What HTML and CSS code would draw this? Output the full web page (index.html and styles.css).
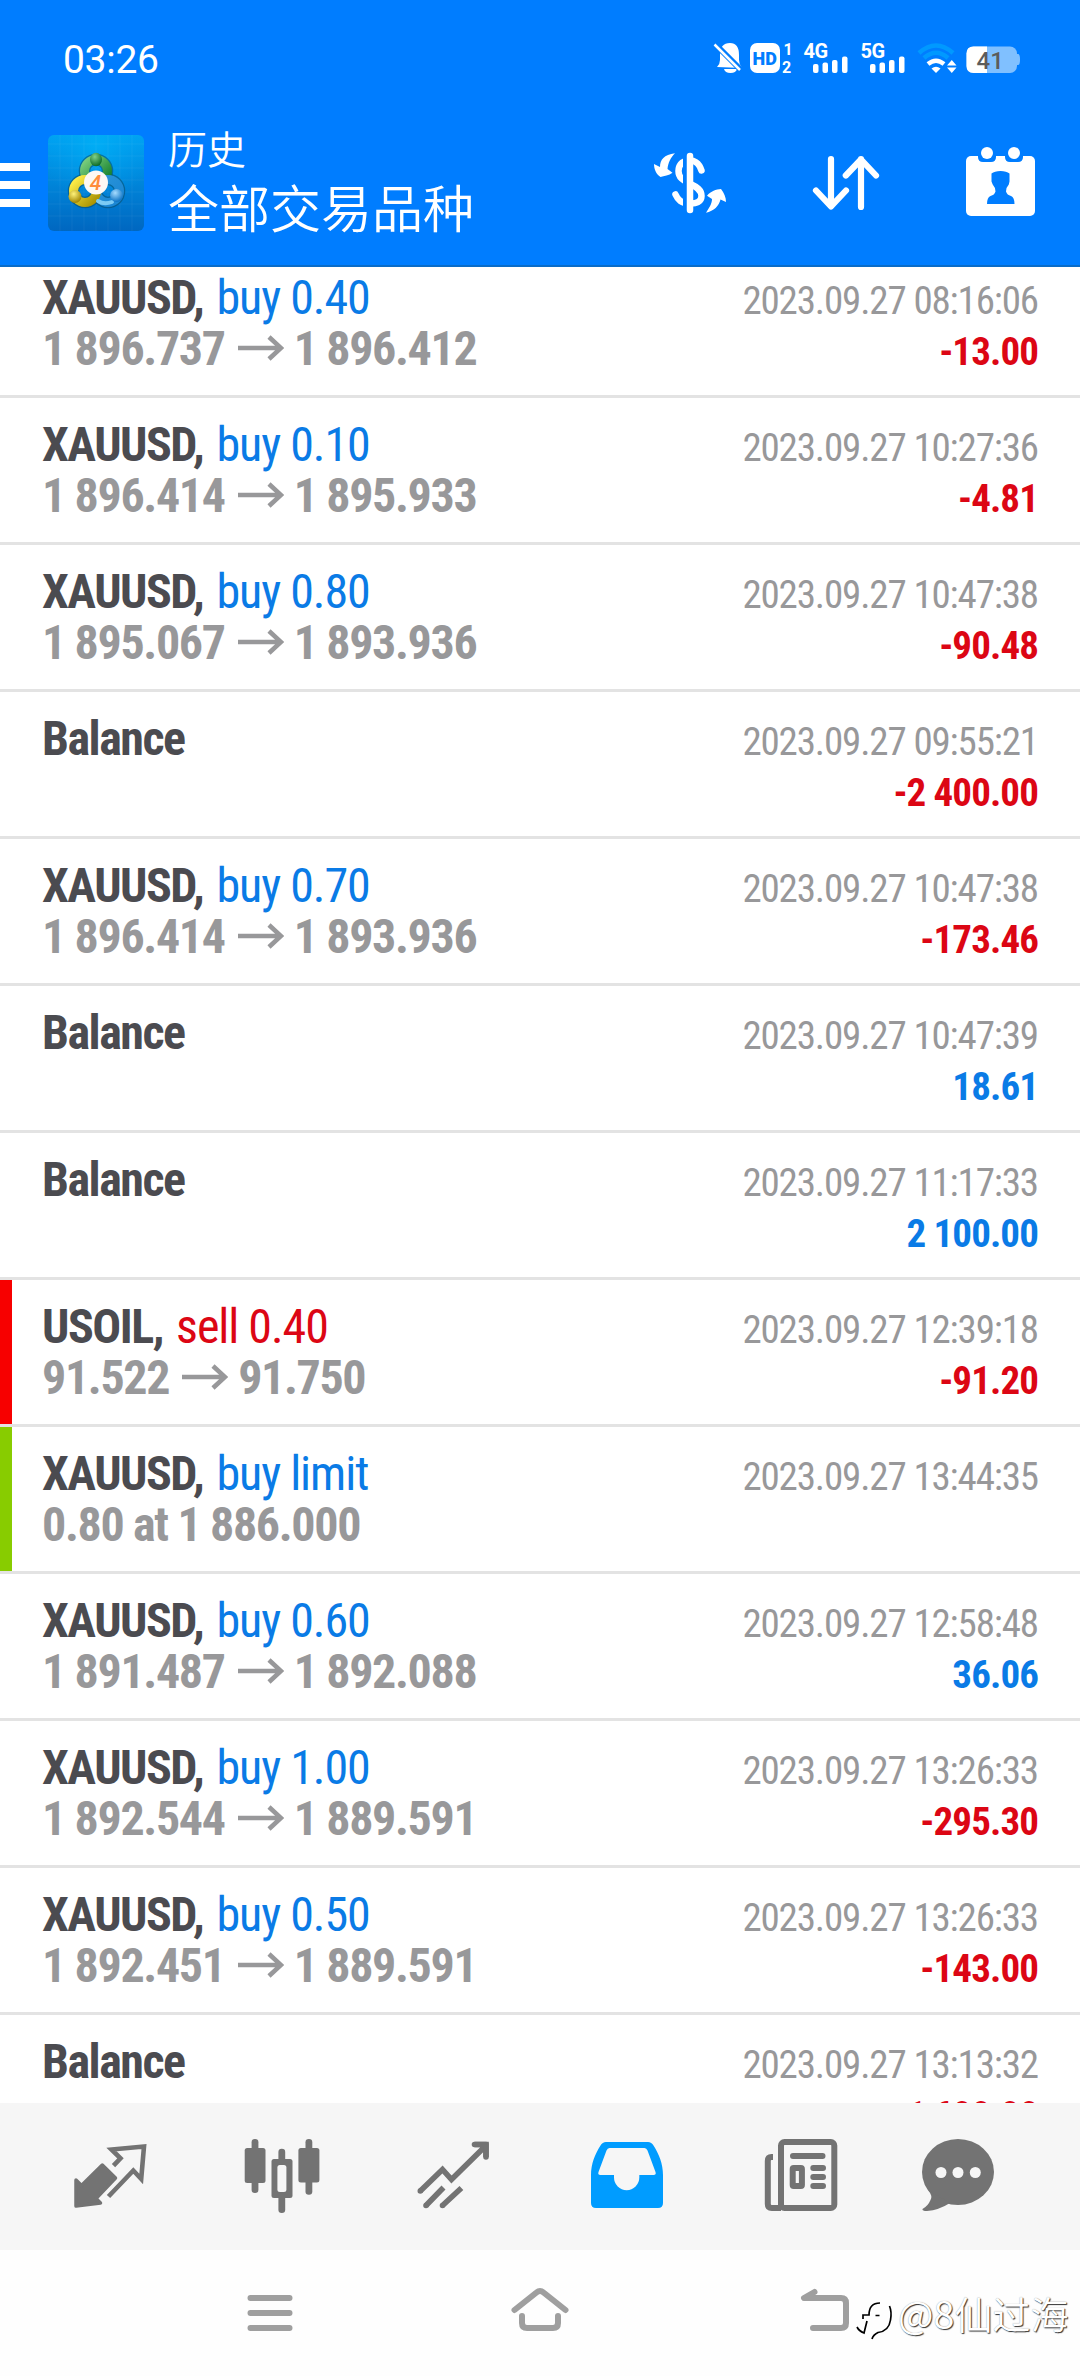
FILE: index.html
```
<!DOCTYPE html>
<html lang="zh-CN">
<head>
<meta charset="utf-8">
<title>历史</title>
<link rel="stylesheet" href="styles.css">
</head>
<body>
<svg class="defs" width="0" height="0" aria-hidden="true">
  <symbol id="arrow" viewBox="0 0 46 26"><path d="M0 13H43M31 2L43 13L31 24" fill="none" stroke="currentColor" stroke-width="4.6"/></symbol>
</svg>
<div class="screen">
  <header class="header">
    <div class="status">
      <span class="time">03:26</span>
      <svg class="status-icons" width="330" height="48" viewBox="700 34 330 48">
        <g fill="#fff">
          <path d="M717 67q3-3 3-7v-5q0-12 10-12 9 0 9 12v5q0 4 3 8zM724 69h13q-1 4-6.500 4T724 69z"/>
          <path d="M713 42L742 71" stroke="#007dff" stroke-width="6"/>
          <path d="M714.500 44.500L740 70" stroke="#fff" stroke-width="2.500"/>
          <rect x="750" y="43" width="30" height="30" rx="7"/>
          <rect x="813" y="64" width="5.500" height="9" rx="2"/><rect x="822.500" y="62.500" width="5.500" height="10.500" rx="2"/><rect x="832" y="60" width="5.500" height="13" rx="2"/><rect x="842" y="56.500" width="5.500" height="16.500" rx="2"/>
          <rect x="870" y="64" width="5.500" height="9" rx="2"/><rect x="879.500" y="62.500" width="5.500" height="10.500" rx="2"/><rect x="889" y="60" width="5.500" height="13" rx="2"/><rect x="899" y="56.500" width="5.500" height="16.500" rx="2"/>
          <path d="M931.500 68.500Q936 65 940.500 68.500L936 73z"/>
          <path d="M947 65.500L951.800 60L956.500 65.500zM947 67.500L951.800 73L956.500 67.500z"/>
          <text x="783.500" y="54.500" class="t-num">1</text><text x="782" y="73" class="t-num">2</text>
          <text x="803.500" y="57.500" class="t-net">4G</text><text x="860.500" y="57.500" class="t-net">5G</text>
        </g>
        <text x="752.500" y="65" class="t-hd">HD</text>
        <path d="M928 64Q936 57.500 944 64" fill="none" stroke="#fff" stroke-width="4.500"/>
        <path d="M919 53Q936 38 953 53M924 58Q936 47.500 948 58" fill="none" stroke="#0099ff" stroke-width="4.500"/>
        <path d="M1016 54h2q2 0 2 5.500t-2 5.500h-2z" fill="#80c0ff"/>
        <rect x="966.500" y="46.500" width="50.500" height="26.500" rx="7" fill="#80c0ff"/>
        <path d="M987 46.500V73H973.500q-7 0-7-7V53.500q0-7 7-7z" fill="#fff"/>
        <text x="976.500" y="68.500" class="t-bat">41</text>
      </svg>
    </div>
    <div class="toolbar">
      <div class="menu"><i></i><i></i><i></i></div>
      <svg class="logo" width="96" height="96" viewBox="0 0 96 96">
        <defs>
          <linearGradient id="bg" x1="0" y1="0" x2="0" y2="1"><stop offset="0" stop-color="#00a3f2"/><stop offset=".45" stop-color="#0088dc"/><stop offset="1" stop-color="#0067c0"/></linearGradient>
          <radialGradient id="glow" cx=".5" cy=".1" r=".6"><stop offset="0" stop-color="#00b4f8" stop-opacity=".7"/><stop offset="1" stop-color="#00a0f0" stop-opacity="0"/></radialGradient>
          <linearGradient id="gr" x1="0" y1="0" x2="1" y2="1"><stop offset="0" stop-color="#7ccf80"/><stop offset="1" stop-color="#0e7a26"/></linearGradient>
          <linearGradient id="ye" x1="0" y1="0" x2="1" y2="1"><stop offset="0" stop-color="#fff04a"/><stop offset="1" stop-color="#a89000"/></linearGradient>
          <linearGradient id="bl" x1="0" y1="0" x2="1" y2="1"><stop offset="0" stop-color="#2a94d8"/><stop offset="1" stop-color="#1a86d4"/></linearGradient>
          <radialGradient id="gb" cx=".4" cy=".3" r=".7"><stop offset="0" stop-color="#7fd08a"/><stop offset="1" stop-color="#0c6a26"/></radialGradient>
          <radialGradient id="yb" cx=".4" cy=".3" r=".7"><stop offset="0" stop-color="#fff27a"/><stop offset="1" stop-color="#a08400"/></radialGradient>
          <radialGradient id="bb" cx=".4" cy=".3" r=".7"><stop offset="0" stop-color="#a5dcff"/><stop offset="1" stop-color="#0b72c4"/></radialGradient>
        </defs>
        <rect width="96" height="96" rx="6" fill="url(#bg)"/><rect width="96" height="96" rx="6" fill="url(#glow)"/>
        <path d="M12 0V96M24 0V96M36 0V96M48 0V96M60 0V96M72 0V96M84 0V96M0 9H96M0 21H96M0 33H96M0 45H96M0 57H96M0 69H96M0 81H96" stroke="#fff" stroke-opacity=".05"/>
        <g fill="none" stroke-linecap="round">
          <g stroke="#0a4a66" stroke-opacity=".55" stroke-width="11.500"><circle cx="48" cy="36" r="11.500"/><circle cx="37" cy="56" r="11.500"/><circle cx="60" cy="56" r="11.500"/></g>
          <circle cx="48" cy="36" r="11.500" stroke="url(#gr)" stroke-width="9"/>
          <circle cx="60" cy="56" r="11.500" stroke="url(#bl)" stroke-width="9"/>
          <circle cx="37" cy="56" r="11.500" stroke="url(#ye)" stroke-width="9"/>
          <path d="M50 66Q56 70 64 67" stroke="#7ccbf5" stroke-width="4"/>
        </g>
        <ellipse cx="48" cy="24.500" rx="6" ry="6.800" fill="url(#gb)"/>
        <circle cx="27" cy="61.500" r="6.500" fill="url(#yb)"/><circle cx="68.500" cy="60.500" r="6.500" fill="url(#bb)"/>
        <circle cx="48" cy="47.500" r="12" fill="#fdf8f4"/>
        <text x="47.500" y="55" class="t-four">4</text>
      </svg>
      <div class="titles"><span class="t1">历史</span><span class="t2">全部交易品种</span></div>
      <svg class="act a1" width="80" height="66" viewBox="0 0 80 66">
        <path d="M51.500 20.500C49 12 43 10 39 10.500C31 11 28.500 16 28.500 21C28.500 29 35 31 40.500 34C47 37 51.500 40 51.500 46C51.500 52 46 54 39 53.500C31 53 28 50 25.500 44.500" fill="none" stroke="#fff" stroke-width="6.500" stroke-linecap="round"/>
        <path d="M35 2V64" stroke="#007dff" stroke-width="4"/>
        <path d="M40 6V60" stroke="#fff" stroke-width="6.500" stroke-linecap="round"/>
        <path d="M25 3.300C14 4.500 10 10 10 17L4 14C4 19 6 24 10.500 27C14 26 19 25.500 22.500 22.700L17.500 19C18 13 21 7 25 3.300ZM56 62.700C59 58 62 54 62 49L57 45.700C61 41 66 39.500 71 39C74 43 76 47 76 52L70.500 49.500C69 56 64 61 56 62.700Z" fill="#fff"/>
      </svg>
      <svg class="act a2" width="72" height="66" viewBox="0 0 72 66"><path d="M21 9V56M6 40.500L21 56.500L36 40.500M51 57V9M35.800 25.500L51 9.500L66 25.500" fill="none" stroke="#fff" stroke-width="6.200" stroke-linecap="round" stroke-linejoin="round"/></svg>
      <svg class="act a3" width="70" height="72" viewBox="0 0 70 72">
        <rect y="10" width="69" height="60" rx="5" fill="#fff"/>
        <path d="M12 6h18v5q0 5-5 5h-8q-5 0-5-5zM39 6h18v5q0 5-5 5h-8q-5 0-5-5z" fill="#007dff"/>
        <circle cx="21" cy="7" r="6" fill="#fff"/><circle cx="48" cy="7" r="6" fill="#fff"/>
        <path d="M34.500 25q6 0 9 2.500v8l-.700 3q-2.800 3-2.800 7 1 3.500 5 4.500 3.500 1.500 3.500 8H21q0-6.500 3.500-8 4-1 5-4.500 0-4-2.800-7l-1.200-3v-8q3-2.500 9-2.500z" fill="#007dff"/>
      </svg>
    </div>
  </header>

  <main class="list">
    <div class="row first"><div class="line"><span><b>XAUUSD,</b> <span class="buy">buy 0.40</span></span><time>2023.09.27 08:16:06</time></div><div class="line"><span class="price">1 896.737<svg class="ar"><use href="#arrow"/></svg>1 896.412</span><span class="sum neg">-13.00</span></div></div>
    <div class="row"><div class="line"><span><b>XAUUSD,</b> <span class="buy">buy 0.10</span></span><time>2023.09.27 10:27:36</time></div><div class="line"><span class="price">1 896.414<svg class="ar"><use href="#arrow"/></svg>1 895.933</span><span class="sum neg">-4.81</span></div></div>
    <div class="row"><div class="line"><span><b>XAUUSD,</b> <span class="buy">buy 0.80</span></span><time>2023.09.27 10:47:38</time></div><div class="line"><span class="price">1 895.067<svg class="ar"><use href="#arrow"/></svg>1 893.936</span><span class="sum neg">-90.48</span></div></div>
    <div class="row"><div class="line"><b>Balance</b><time>2023.09.27 09:55:21</time></div><div class="line end"><span class="sum neg">-2 400.00</span></div></div>
    <div class="row"><div class="line"><span><b>XAUUSD,</b> <span class="buy">buy 0.70</span></span><time>2023.09.27 10:47:38</time></div><div class="line"><span class="price">1 896.414<svg class="ar"><use href="#arrow"/></svg>1 893.936</span><span class="sum neg">-173.46</span></div></div>
    <div class="row"><div class="line"><b>Balance</b><time>2023.09.27 10:47:39</time></div><div class="line end"><span class="sum pos">18.61</span></div></div>
    <div class="row"><div class="line"><b>Balance</b><time>2023.09.27 11:17:33</time></div><div class="line end"><span class="sum pos">2 100.00</span></div></div>
    <div class="row mark-red"><div class="line"><span><b>USOIL,</b> <span class="sell">sell 0.40</span></span><time>2023.09.27 12:39:18</time></div><div class="line"><span class="price">91.522<svg class="ar"><use href="#arrow"/></svg>91.750</span><span class="sum neg">-91.20</span></div></div>
    <div class="row mark-green"><div class="line"><span><b>XAUUSD,</b> <span class="buy">buy limit</span></span><time>2023.09.27 13:44:35</time></div><div class="line"><span class="price">0.80 at 1 886.000</span></div></div>
    <div class="row"><div class="line"><span><b>XAUUSD,</b> <span class="buy">buy 0.60</span></span><time>2023.09.27 12:58:48</time></div><div class="line"><span class="price">1 891.487<svg class="ar"><use href="#arrow"/></svg>1 892.088</span><span class="sum pos">36.06</span></div></div>
    <div class="row"><div class="line"><span><b>XAUUSD,</b> <span class="buy">buy 1.00</span></span><time>2023.09.27 13:26:33</time></div><div class="line"><span class="price">1 892.544<svg class="ar"><use href="#arrow"/></svg>1 889.591</span><span class="sum neg">-295.30</span></div></div>
    <div class="row"><div class="line"><span><b>XAUUSD,</b> <span class="buy">buy 0.50</span></span><time>2023.09.27 13:26:33</time></div><div class="line"><span class="price">1 892.451<svg class="ar"><use href="#arrow"/></svg>1 889.591</span><span class="sum neg">-143.00</span></div></div>
    <div class="row"><div class="line"><b>Balance</b><time>2023.09.27 13:13:32</time></div><div class="line end"><span class="sum neg">-1 600.00</span></div></div>
  </main>

  <nav class="tabs">
    <svg viewBox="0 0 96 96"><path d="M40.300 37L53.500 50L34 70.500L38.500 75L14 78V52L19.500 57.500z" fill="#737373" stroke="#737373" stroke-width="3.500" stroke-linejoin="round"/><path d="M51.500 37.700L58.500 30.300L49.500 21.500L82 18.500L79.200 51L71.300 42.500L46.500 68.500" fill="none" stroke="#737373" stroke-width="4.600"/></svg>
    <svg viewBox="0 0 96 96" fill="#737373"><rect x="16.600" y="11" width="6.800" height="54" rx="3.300"/><rect x="9.700" y="20" width="20.800" height="35" rx="2.500"/><rect x="43.400" y="20.700" width="6.800" height="64.300" rx="3.300"/><rect x="36.500" y="31" width="21" height="39" rx="2.500"/><rect x="42.400" y="37" width="9" height="27" rx="2.500" fill="#f6f6f6"/><rect x="70.500" y="11" width="6.800" height="55.700" rx="3.300"/><rect x="63.400" y="20" width="21" height="34.500" rx="2.500"/></svg>
    <svg viewBox="0 0 96 96"><path d="M13.300 63L35.500 41.500L44.500 51.500L77.500 19M67.500 16.500H79V29M19 77.500L36.500 59.500M35.500 77.500L54.400 60" fill="none" stroke="#737373" stroke-width="5.600"/><path d="M13.300 63h0M67.500 16.500H79V29M19 77.500h0M35.500 77.500h0" fill="none" stroke="#737373" stroke-width="5.600" stroke-linecap="round" stroke-linejoin="round"/></svg>
    <svg viewBox="0 0 96 96"><path fill-rule="evenodd" fill="#009cff" d="M26 14H68Q71.500 14 73.500 17.500C79 26 83 36 83 47V75q0 5-5 5H16q-5 0-5-5V47C11 36 15 26 20.500 17.500Q22.500 14 26 14zM29.500 20Q27.500 20 26.500 22.500L18.500 44Q17.500 47 20.500 47H34V49.500a12.600 12.600 0 0 0 25.300 0V47H73.500Q76.500 47 75.500 44L67.500 22.500Q66.500 20 64.500 20z"/></svg>
    <svg viewBox="0 0 96 96" fill="none" stroke="#737373" stroke-width="6"><rect x="29" y="14" width="53.300" height="66" rx="3.500"/><path d="M21 29H19.500q-3.700 0-3.700 4V76q0 4 4 4H29"/><path d="M41 28H70.500M61.300 40H71M61.300 49H71M61.300 58H71" stroke-linecap="round"/><rect x="40.700" y="40" width="9.200" height="18" rx="1"/></svg>
    <svg viewBox="0 0 96 96"><ellipse cx="48" cy="44" rx="36" ry="33" fill="#737373"/><path d="M18 62Q23 68 20.500 72Q18 78 12.500 81Q12 83 17 83Q29 82 40 75z" fill="#737373"/><g fill="#f6f6f6"><circle cx="31" cy="44.500" r="5.500"/><circle cx="48" cy="44.500" r="5.500"/><circle cx="65.300" cy="44.500" r="5.500"/></g></svg>
  </nav>

  <footer class="sysnav">
    <svg width="60" height="60" viewBox="240 2283 60 60"><path d="M250.500 2298H289.500M250.500 2313H289.500M250.500 2328H289.500"/></svg>
    <svg width="60" height="60" viewBox="510 2283 60 60"><path d="M514.500 2310L536.500 2292.500Q540 2289.500 543.500 2292.500L565.500 2310M522 2316V2323Q522 2328 527 2328H553Q558 2328 558 2323V2316"/></svg>
    <svg width="60" height="60" viewBox="795 2283 60 60"><path d="M814.500 2292L804 2298H841Q846 2298 846 2303V2323Q846 2328 841 2328H813"/></svg>
  </footer>

  <div class="watermark">
    <svg width="40" height="46" viewBox="855 2298 40 46"><path d="M857 2327Q859 2331 864 2333L867 2321M863 2319V2315H869Q869 2303 880 2303M875.500 2315.500H879.500M889.500 2306Q892 2312 890.500 2320Q889 2331 878 2332.500Q873 2335 872 2339" fill="none" stroke="#000" stroke-width="1.700"/></svg>
    <span>@8仙过海</span>
  </div>
</div>
</body>
</html>
```
FILE: styles.css
```
* { box-sizing: border-box; }
body { margin: 0; background: #fff; font-family: "Roboto Condensed", Roboto, sans-serif; }
.defs { position: absolute; }
.screen { position: relative; width: 1080px; height: 2376px; display: flex; flex-direction: column; overflow: hidden; }

.header { flex: none; height: 267px; background: #007dff; border-bottom: 2px solid #0a6cc8; color: #fff; }
.status { display: flex; justify-content: space-between; align-items: center; height: 116px; padding: 0 50px 0 63px; }
.time { font: 450 39px/44px Roboto, sans-serif; letter-spacing: -.3px; margin-top: 4px; }
.status-icons { flex: none; }
.t-num { font: 700 16px Roboto, sans-serif; }
.t-net { font: 700 20px Roboto, sans-serif; letter-spacing: -.5px; }
.t-hd { font: 900 18px Roboto, sans-serif; fill: #007dff; }
.t-bat { font: 500 24px Roboto, sans-serif; fill: #5c5c5c; }
.t-four { font: italic 500 21px Roboto, sans-serif; fill: #ff8c3c; text-anchor: middle; }

.toolbar { display: flex; align-items: flex-start; height: 149px; }
.menu { display: flex; flex-direction: column; gap: 10px; width: 30px; margin: 47px 18px 0 0; }
.menu i { height: 8px; background: #fff; }
.logo { margin-top: 19px; }
.titles { display: flex; flex-direction: column; margin: 9px auto 0 24px; font-family: "Noto Sans CJK SC", sans-serif; font-weight: 350; }
.t1 { font-size: 39px; line-height: 44px; }
.t2 { font-size: 51px; line-height: 74px; }
.act { flex: none; }
.a1 { margin: 34px 80px 0 0; }
.a2 { margin: 34px 84px 0 0; }
.a3 { margin: 30px 44px 0 0; }

.list { flex: none; height: 1836px; overflow: hidden; }
.row { height: 147px; padding: 21px 42px 0; border-bottom: 3px solid #e3e3e3; color: #4b4b50; font-size: 48px; }
.first { margin-top: -16px; }
.mark-red { background: linear-gradient(#f70000, #f70000) left / 12px 100% no-repeat; }
.mark-green { background: linear-gradient(#88cc00, #88cc00) left / 12px 100% no-repeat; }
.line { display: flex; justify-content: space-between; align-items: baseline; height: 51px; line-height: 51px; white-space: nowrap; letter-spacing: -.9px; }
.end { justify-content: flex-end; }
.end::before { content: "\200b"; }
.line b { font-weight: 700; letter-spacing: -1.5px; }
.buy, .sell { margin-left: 3px; letter-spacing: -1.05px; }
.buy { color: #0a7be6; }
.sell { color: #dc0614; }
.price { color: #98989a; font-weight: 700; letter-spacing: -1.35px; }
.ar { width: 46px; height: 26px; margin: 0 10px 0 13px; vertical-align: 4px; }
time { font-size: 39px; color: #98989a; letter-spacing: -1.14px; }
.sum { font-size: 39px; font-weight: 700; }
.neg { color: #dc0614; }
.pos { color: #0a7be6; }

.tabs { flex: none; height: 147px; padding: 25px 0 0 62px; background: #f6f6f6; display: grid; grid-template-columns: repeat(4, 172.5px) 158px 96px; }
.tabs svg { width: 96px; height: 96px; }
.sysnav { flex: none; height: 126px; padding: 33px 0 0 240px; background: #fefefe; display: grid; grid-template-columns: 270px 285px 60px; }
.sysnav svg { fill: none; stroke: #9f9f9f; stroke-width: 6; stroke-linecap: round; stroke-linejoin: round; }

.watermark { position: absolute; left: 855px; top: 2285px; display: flex; align-items: flex-start; }
.watermark svg { margin-top: 13px; }
.watermark span { font: 350 38px/56px "Noto Sans CJK SC", sans-serif; color: #fff; text-shadow: 1px 1px 1px #333, 0 0 1px #999; margin-left: 3px; }
```
